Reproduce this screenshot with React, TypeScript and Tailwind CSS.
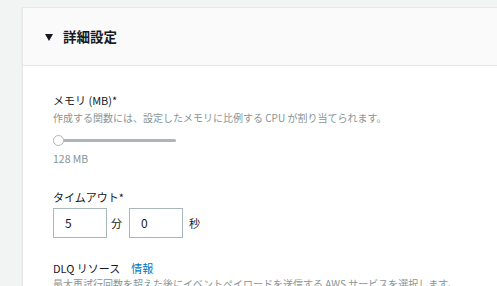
import React from 'react';

const font = { fontFamily: '"Noto Sans CJK JP", "Noto Sans", sans-serif' };

const Slider = () => (
    <div className="flex items-center w-[123px] h-[12px]">
        <div className="w-[11px] h-[11px] rounded-full bg-white border border-[#aab7b8] shrink-0 z-10" />
        <div className="flex-1 h-[3px] bg-[#aab7b8] -ml-[1px] rounded-r-sm" />
    </div>
);

const TimeBox = ({ value }: { value: string }) => (
    <div className="w-[54px] h-[30px] border border-[#aab7b8] bg-white flex items-center pl-[11px] text-[12px] text-[#16191f]">
        {value}
    </div>
);

export default function App() {
    return (
        <div className="min-h-screen bg-[#f2f3f3] pt-[7px] pl-[22px] overflow-hidden" style={font}>
            <div className="bg-white border-l border-t border-[#e6e8e8] min-h-[300px] w-[500px] shadow-[0_1px_1px_rgba(0,28,36,0.15)]">
                <div className="h-[58px] bg-[#fafafa] border-b border-[#e6e8e8] flex items-center pl-[22px] gap-[10px]">
                    <svg width="8" height="7" viewBox="0 0 8 7" className="mt-[1px]">
                        <polygon points="0,0 8,0 4,7" fill="#16191f" />
                    </svg>
                    <span className="text-[13.5px] font-bold text-[#16191f]">詳細設定</span>
                </div>
                <div className="pl-[30px] pt-[26px]">
                    <div className="text-[11px] text-[#16191f] leading-[16px]">メモリ (MB)*</div>
                    <div className="text-[10px] text-[#879596] leading-[16px] mt-[2px]">作成する関数には、設定したメモリに比例する CPU が割り当てられます。</div>
                    <div className="mt-[8px]"><Slider /></div>
                    <div className="text-[10.5px] text-[#879596] leading-[16px] mt-[5px]">128 MB</div>
                    <div className="text-[11px] text-[#16191f] leading-[16px] mt-[22px]">タイムアウト*</div>
                    <div className="flex items-center mt-[3px]">
                        <TimeBox value="5" />
                        <span className="text-[11px] text-[#16191f] ml-[4px] mr-[7px]">分</span>
                        <TimeBox value="0" />
                        <span className="text-[11px] text-[#16191f] ml-[6px]">秒</span>
                    </div>
                    <div className="flex items-center gap-[11px] mt-[22px] text-[11px] leading-[16px]">
                        <span className="text-[#16191f]">DLQ リソース</span>
                        <span className="text-[#0073bb]">情報</span>
                    </div>
                    <div className="text-[10px] text-[#879596] leading-[16px] whitespace-nowrap">最大再試行回数を超えた後にイベントペイロードを送信する AWS サービスを選択します。</div>
                </div>
            </div>
        </div>
    );
}
